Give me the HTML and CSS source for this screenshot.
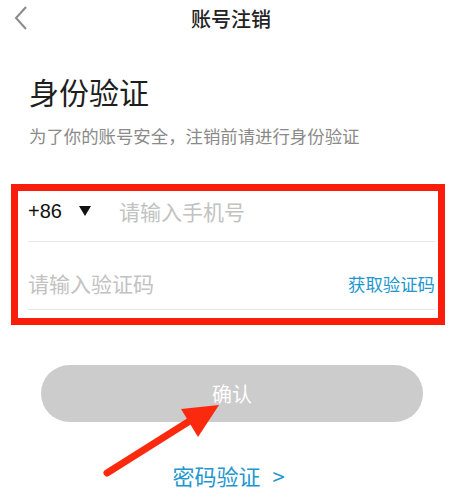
FILE: index.html
```html
<!DOCTYPE html>
<html lang="zh-CN">
<head>
    <meta charset="UTF-8">
    <meta name="viewport" content="width=device-width, initial-scale=1.0">
    <title>账号注销</title>
    <link rel="stylesheet" href="styles.css">
</head>
<body>
    <div class="page">
        <div class="nav-bar">
            <span class="nav-back">
                <svg width="16" height="24" viewBox="0 0 16 24"><path d="M13 1 L3 12 L13 23" fill="none" stroke="#8a8a8a" stroke-width="2"/></svg>
            </span>
            <span class="nav-title">账号注销</span>
        </div>

        <h1 class="verify-title">身份验证</h1>
        <p class="verify-desc">为了你的账号安全，注销前请进行身份验证</p>

        <div class="verify-form">
            <div class="form-row phone-row">
                <span class="area-code">+86</span>
                <svg class="area-arrow" width="12" height="10" viewBox="0 0 12 10"><path d="M0 0 H12 L6 10 Z" fill="#111"/></svg>
                <span class="placeholder">请输入手机号</span>
            </div>
            <div class="form-row code-row">
                <span class="placeholder">请输入验证码</span>
                <span class="get-code">获取验证码</span>
            </div>
        </div>

        <button class="confirm-button">确认</button>

        <div class="alt-link">密码验证<span class="alt-arrow">&gt;</span></div>

        <!-- annotation arrow -->
        <svg class="hint-arrow" width="457" height="499" viewBox="0 0 457 499">
            <line x1="107" y1="473" x2="196" y2="417" stroke="#fb2a0e" stroke-width="7" stroke-linecap="round"/>
            <path d="M219 405 L181 409 L198 437 Z" fill="#fb2a0e"/>
        </svg>
    </div>
</body>
</html>
```

FILE: styles.css
```css
body {
    margin: 0;
    background: #fff;
    font-family: "Noto Sans CJK SC", "Noto Sans", sans-serif;
    color: #222;
}
.page {
    position: relative;
    width: 457px;
    height: 499px;
    overflow: hidden;
}
.nav-bar {
    position: relative;
    height: 37px;
    line-height: 37px;
    text-align: center;
}
.nav-back {
    position: absolute;
    left: 13px;
    top: 6px;
    line-height: 0;
}
.nav-title {
    font-size: 20px;
    font-weight: 500;
    color: #222;
    margin-left: 5px;
}
.verify-title {
    margin: 39px 0 0 29px;
    font-size: 30px;
    line-height: 30px;
    font-weight: 400;
    color: #1e1e1e;
}
.verify-desc {
    margin: 21px 0 0 29px;
    font-size: 17.4px;
    line-height: 18px;
    color: #8a8a8a;
}
.verify-form {
    margin: 39px 12px 0 11px;
    border: 7px solid #fb1d0c;
    padding-bottom: 8px;
}
.form-row {
    display: flex;
    align-items: center;
    margin: 0 3px 0 10px;
    border-bottom: 1px solid #e6e6e6;
}
.phone-row {
    height: 40px;
    padding-bottom: 10px;
}
.code-row {
    height: 52px;
    padding-top: 15px;
    justify-content: space-between;
}
.area-code {
    font-family: "Liberation Sans", Arial, sans-serif;
    font-size: 20px;
    color: #111;
}
.area-arrow {
    margin-left: 17px;
}
.phone-row .placeholder {
    margin-left: 28px;
}
.placeholder {
    font-size: 21px;
    color: #c2c2c2;
}
.get-code {
    font-size: 17.4px;
    color: #2297cf;
}
.confirm-button {
    display: block;
    margin: 40px 0 0 41px;
    width: 382px;
    height: 57px;
    padding: 0;
    border: none;
    border-radius: 29px;
    background: #cccccc;
    color: #fff;
    font-family: inherit;
    font-size: 20px;
}
.alt-link {
    margin-top: 42px;
    text-align: center;
    font-size: 22px;
    line-height: 23px;
    color: #2297cf;
}
.alt-arrow {
    margin-left: 12px;
}
.hint-arrow {
    position: absolute;
    left: 0;
    top: 0;
    pointer-events: none;
}
```
